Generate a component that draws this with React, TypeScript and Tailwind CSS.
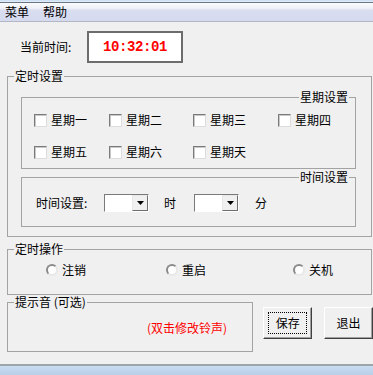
import React from 'react';

const cjk = { fontFamily: '"Noto Sans CJK SC", "Liberation Sans", sans-serif' };

const CheckBox: React.FC<{ label: string }> = ({ label }) => (
  <label className="flex items-center gap-[4px] h-[16px]">
    <span className="block w-[13px] h-[13px] border border-t-[#7a7a7a] border-l-[#7a7a7a] border-b-[#dcdcdc] border-r-[#dcdcdc] bg-white shadow-[inset_1px_1px_0_#c8c8c8]" />
    <span className="text-[12px] leading-[14px]">{label}</span>
  </label>
);

const Radio: React.FC<{ label: string }> = ({ label }) => (
  <label className="flex items-center gap-[4px] h-[14px]">
    <span className="block w-[12px] h-[12px] rounded-full border-[2px] border-t-[#8a8a8a] border-l-[#8a8a8a] border-b-[#e8e8e8] border-r-[#e8e8e8] bg-white" />
    <span className="text-[12px] leading-[14px]">{label}</span>
  </label>
);

const Combo: React.FC = () => (
  <div className="flex w-[45px] h-[18px] border border-t-[#7a7a7a] border-l-[#7a7a7a] border-b-white border-r-white bg-white">
    <div className="flex-1" />
    <div className="w-[16px] h-[16px] flex items-center justify-center bg-[#f0f0f0] border border-t-[#e8e8e8] border-l-[#e8e8e8] border-b-[#6e6e6e] border-r-[#6e6e6e]">
      <svg width="7" height="4" viewBox="0 0 7 4">
        <polygon points="0,0 7,0 3.5,4" fill="#000" />
      </svg>
    </div>
  </div>
);

const App: React.FC = () => {
  return (
    <div className="w-[373px] h-[375px] overflow-hidden flex flex-col bg-[#f0f0f0] text-black" style={cjk}>
      {/* window frame top */}
      <div className="h-[2px] bg-gradient-to-b from-[#c6dcf2] to-[#e8f0f9]" />
      <div className="h-[1px] bg-[#6a7585]" />

      {/* menu bar */}
      <div className="h-[19px] flex items-center gap-[14px] pl-[5px] border-b border-[#b3b7c4] bg-[linear-gradient(#fafbfd_0%,#eef0f8_30%,#d9ddf0_40%,#d6daef_100%)]">
        <span className="text-[12px] leading-[14px]">菜单</span>
        <span className="text-[12px] leading-[14px]">帮助</span>
      </div>

      {/* current time */}
      <div className="mt-[9px] h-[32px] flex items-center pl-[20px]">
        <span className="w-[67px] text-[12px] leading-[14px]">当前时间:</span>
        <div className="w-[96px] h-[32px] border-2 border-[#6c6c6c] bg-white flex items-center justify-center">
          <span
            className="text-[14px] font-bold text-[#ff0000] tracking-[-0.4px]"
            style={{ fontFamily: '"Liberation Mono", monospace' }}
          >
            10:32:01
          </span>
        </div>
      </div>

      {/* 定时设置 */}
      <fieldset className="mt-[6px] ml-[7px] w-[365px] border border-[#a3a3a3] pb-[9px]">
        <legend className="ml-[6px] px-[1px] text-[12px] leading-[14px]">定时设置</legend>

        <fieldset className="mt-[7px] ml-[13px] w-[335px] border border-[#a3a3a3] pb-[8px]">
          <legend className="ml-auto mr-[6px] px-[1px] text-[12px] leading-[14px]">星期设置</legend>
          <div className="mt-[8px] pl-[12px] grid grid-cols-[75px_84px_85px_1fr] gap-y-[16px]">
            <CheckBox label="星期一" />
            <CheckBox label="星期二" />
            <CheckBox label="星期三" />
            <CheckBox label="星期四" />
            <CheckBox label="星期五" />
            <CheckBox label="星期六" />
            <CheckBox label="星期天" />
          </div>
        </fieldset>

        <fieldset className="mt-[1px] ml-[13px] w-[335px] border border-[#a3a3a3] pb-[14px]">
          <legend className="ml-auto mr-[6px] px-[1px] text-[12px] leading-[14px]">时间设置</legend>
          <div className="mt-[10px] h-[18px] flex items-center pl-[14px]">
            <span className="w-[68px] text-[12px] leading-[14px]">时间设置:</span>
            <Combo />
            <span className="ml-[15px] text-[12px] leading-[14px]">时</span>
            <span className="ml-[18px]"><Combo /></span>
            <span className="ml-[16px] text-[12px] leading-[14px]">分</span>
          </div>
        </fieldset>
      </fieldset>

      {/* 定时操作 */}
      <fieldset className="mt-[5px] ml-[7px] w-[365px] border border-[#a3a3a3] pb-[17px]">
        <legend className="ml-[6px] px-[1px] text-[12px] leading-[14px]">定时操作</legend>
        <div className="mt-[7px] pl-[38px] grid grid-cols-[120px_127px_1fr]">
          <Radio label="注销" />
          <Radio label="重启" />
          <Radio label="关机" />
        </div>
      </fieldset>

      {/* 提示音 + buttons */}
      <div className="flex items-start">
        <fieldset className="ml-[7px] w-[247px] border border-[#a3a3a3] pb-[16px]">
          <legend className="ml-[6px] px-[1px] text-[12px] leading-[14px]">提示音 (可选)</legend>
          <div className="mt-[12px] pl-[139px] text-[12px] leading-[14px] text-[#ff0000] whitespace-nowrap">
            (双击修改铃声)
          </div>
        </fieldset>

        <button className="ml-[10px] mt-[12px] w-[49px] h-[32px] p-[4px] bg-[#f0f0f0] border border-t-white border-l-white border-b-[#404040] border-r-[#404040] shadow-[inset_-1px_-1px_0_#a0a0a0]">
          <span className="flex w-full h-full items-center justify-center border border-dotted border-black text-[12px] leading-[14px]">
            保存
          </span>
        </button>
        <button className="ml-[12px] mt-[12px] w-[49px] h-[32px] bg-[#f0f0f0] border border-t-white border-l-white border-b-[#404040] border-r-[#404040] shadow-[inset_-1px_-1px_0_#a0a0a0] text-[12px] leading-[14px]">
          退出
        </button>
      </div>

      {/* window frame bottom */}
      <div className="mt-auto h-[11px] border-t-2 border-[#9da3ab] bg-gradient-to-b from-[#c9dcf0] to-[#b8cfe8]" />
    </div>
  );
};

export default App;
